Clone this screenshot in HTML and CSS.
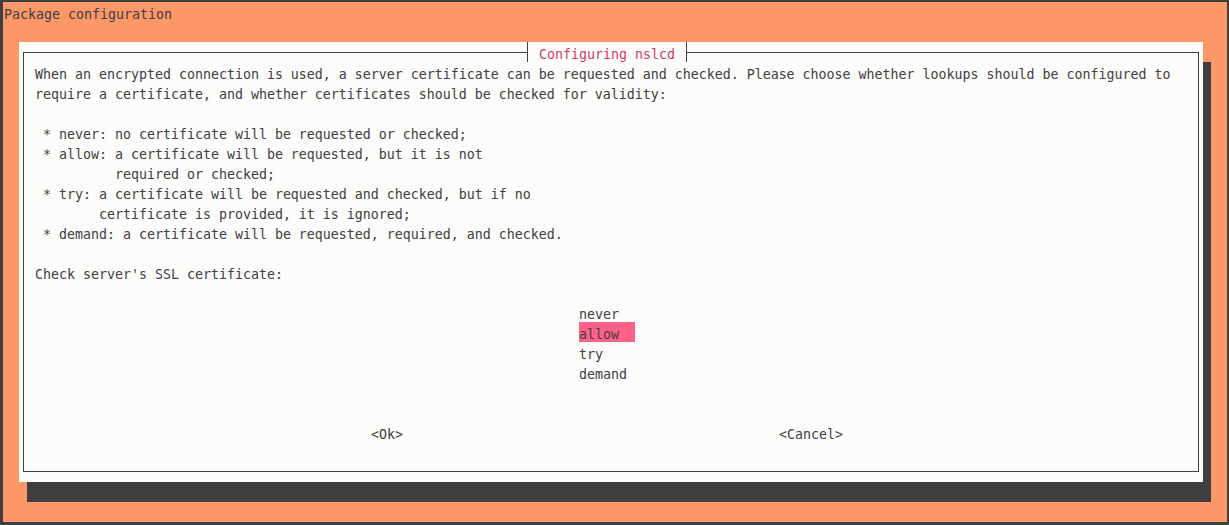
FILE: index.html
```html
<!DOCTYPE html>
<html>
<head>
<meta charset="utf-8">
<link rel="stylesheet" href="styles.css">
</head>
<body>
<div class="screen">
<div class="topbar">Package configuration</div>
<div class="dialog">
<div class="frame">
<div class="title">Configuring nslcd</div>
<div class="message">When an encrypted connection is used, a server certificate can be requested and checked. Please choose whether lookups should be configured to
require a certificate, and whether certificates should be checked for validity:

 * never: no certificate will be requested or checked;
 * allow: a certificate will be requested, but it is not
          required or checked;
 * try: a certificate will be requested and checked, but if no
        certificate is provided, it is ignored;
 * demand: a certificate will be requested, required, and checked.

Check server's SSL certificate:</div>
<ul class="choices">
<li class="choice">never</li>
<li class="choice selected">allow</li>
<li class="choice">try</li>
<li class="choice">demand</li>
</ul>
<div class="buttons">
<span class="btn">&lt;Ok&gt;</span>
<span class="btn">&lt;Cancel&gt;</span>
</div>
</div>
</div>
</div>
</body>
</html>
```
FILE: styles.css
```css
html, body {
  margin: 0;
  padding: 0;
}
body {
  background: #403e41;
  width: 1229px;
  height: 525px;
  box-sizing: border-box;
  padding: 2px 2px 3px 3px;
  overflow: hidden;
}
.screen {
  width: 1224px;
  height: 520px;
  background: #fc9867;
  color: #403e41;
  font-family: "DejaVu Sans Mono", "Liberation Mono", monospace;
  font-size: 13.29px;
  line-height: 20px;
  overflow: hidden;
}
.topbar {
  height: 20px;
  box-sizing: border-box;
  padding: 3px 0 0 1px;
  white-space: pre;
}
.dialog {
  margin: 20px 0 0 16px;
  width: 1184px;
  height: 440px;
  box-sizing: border-box;
  padding: 10px 4px;
  background: #fcfcfa;
  box-shadow: 8px 20px 0 0 #403e41;
}
.frame {
  position: relative;
  height: 100%;
  box-sizing: border-box;
  border: 1px solid #403e41;
  padding: 9px 0 0 11px;
}
.title {
  position: absolute;
  top: -11px;
  left: 503px;
  height: 20px;
  box-sizing: border-box;
  padding: 3px 11px 0;
  border-left: 1px solid #403e41;
  border-right: 1px solid #403e41;
  background: #fcfcfa;
  color: #d03d66;
  white-space: pre;
  overflow: visible;
}
.message {
  white-space: pre;
  height: 220px;
  box-sizing: border-box;
  padding-top: 3px;
}
.choices {
  list-style: none;
  margin: 20px 0 0 544px;
  padding: 0;
}
.choice {
  width: 56px;
  height: 20px;
  box-sizing: border-box;
  padding-top: 3px;
}
.selected {
  background: #ff6188;
}
.buttons {
  display: flex;
  margin: 40px 0 0 336px;
  padding-top: 3px;
  gap: 376px;
  white-space: pre;
}
```
